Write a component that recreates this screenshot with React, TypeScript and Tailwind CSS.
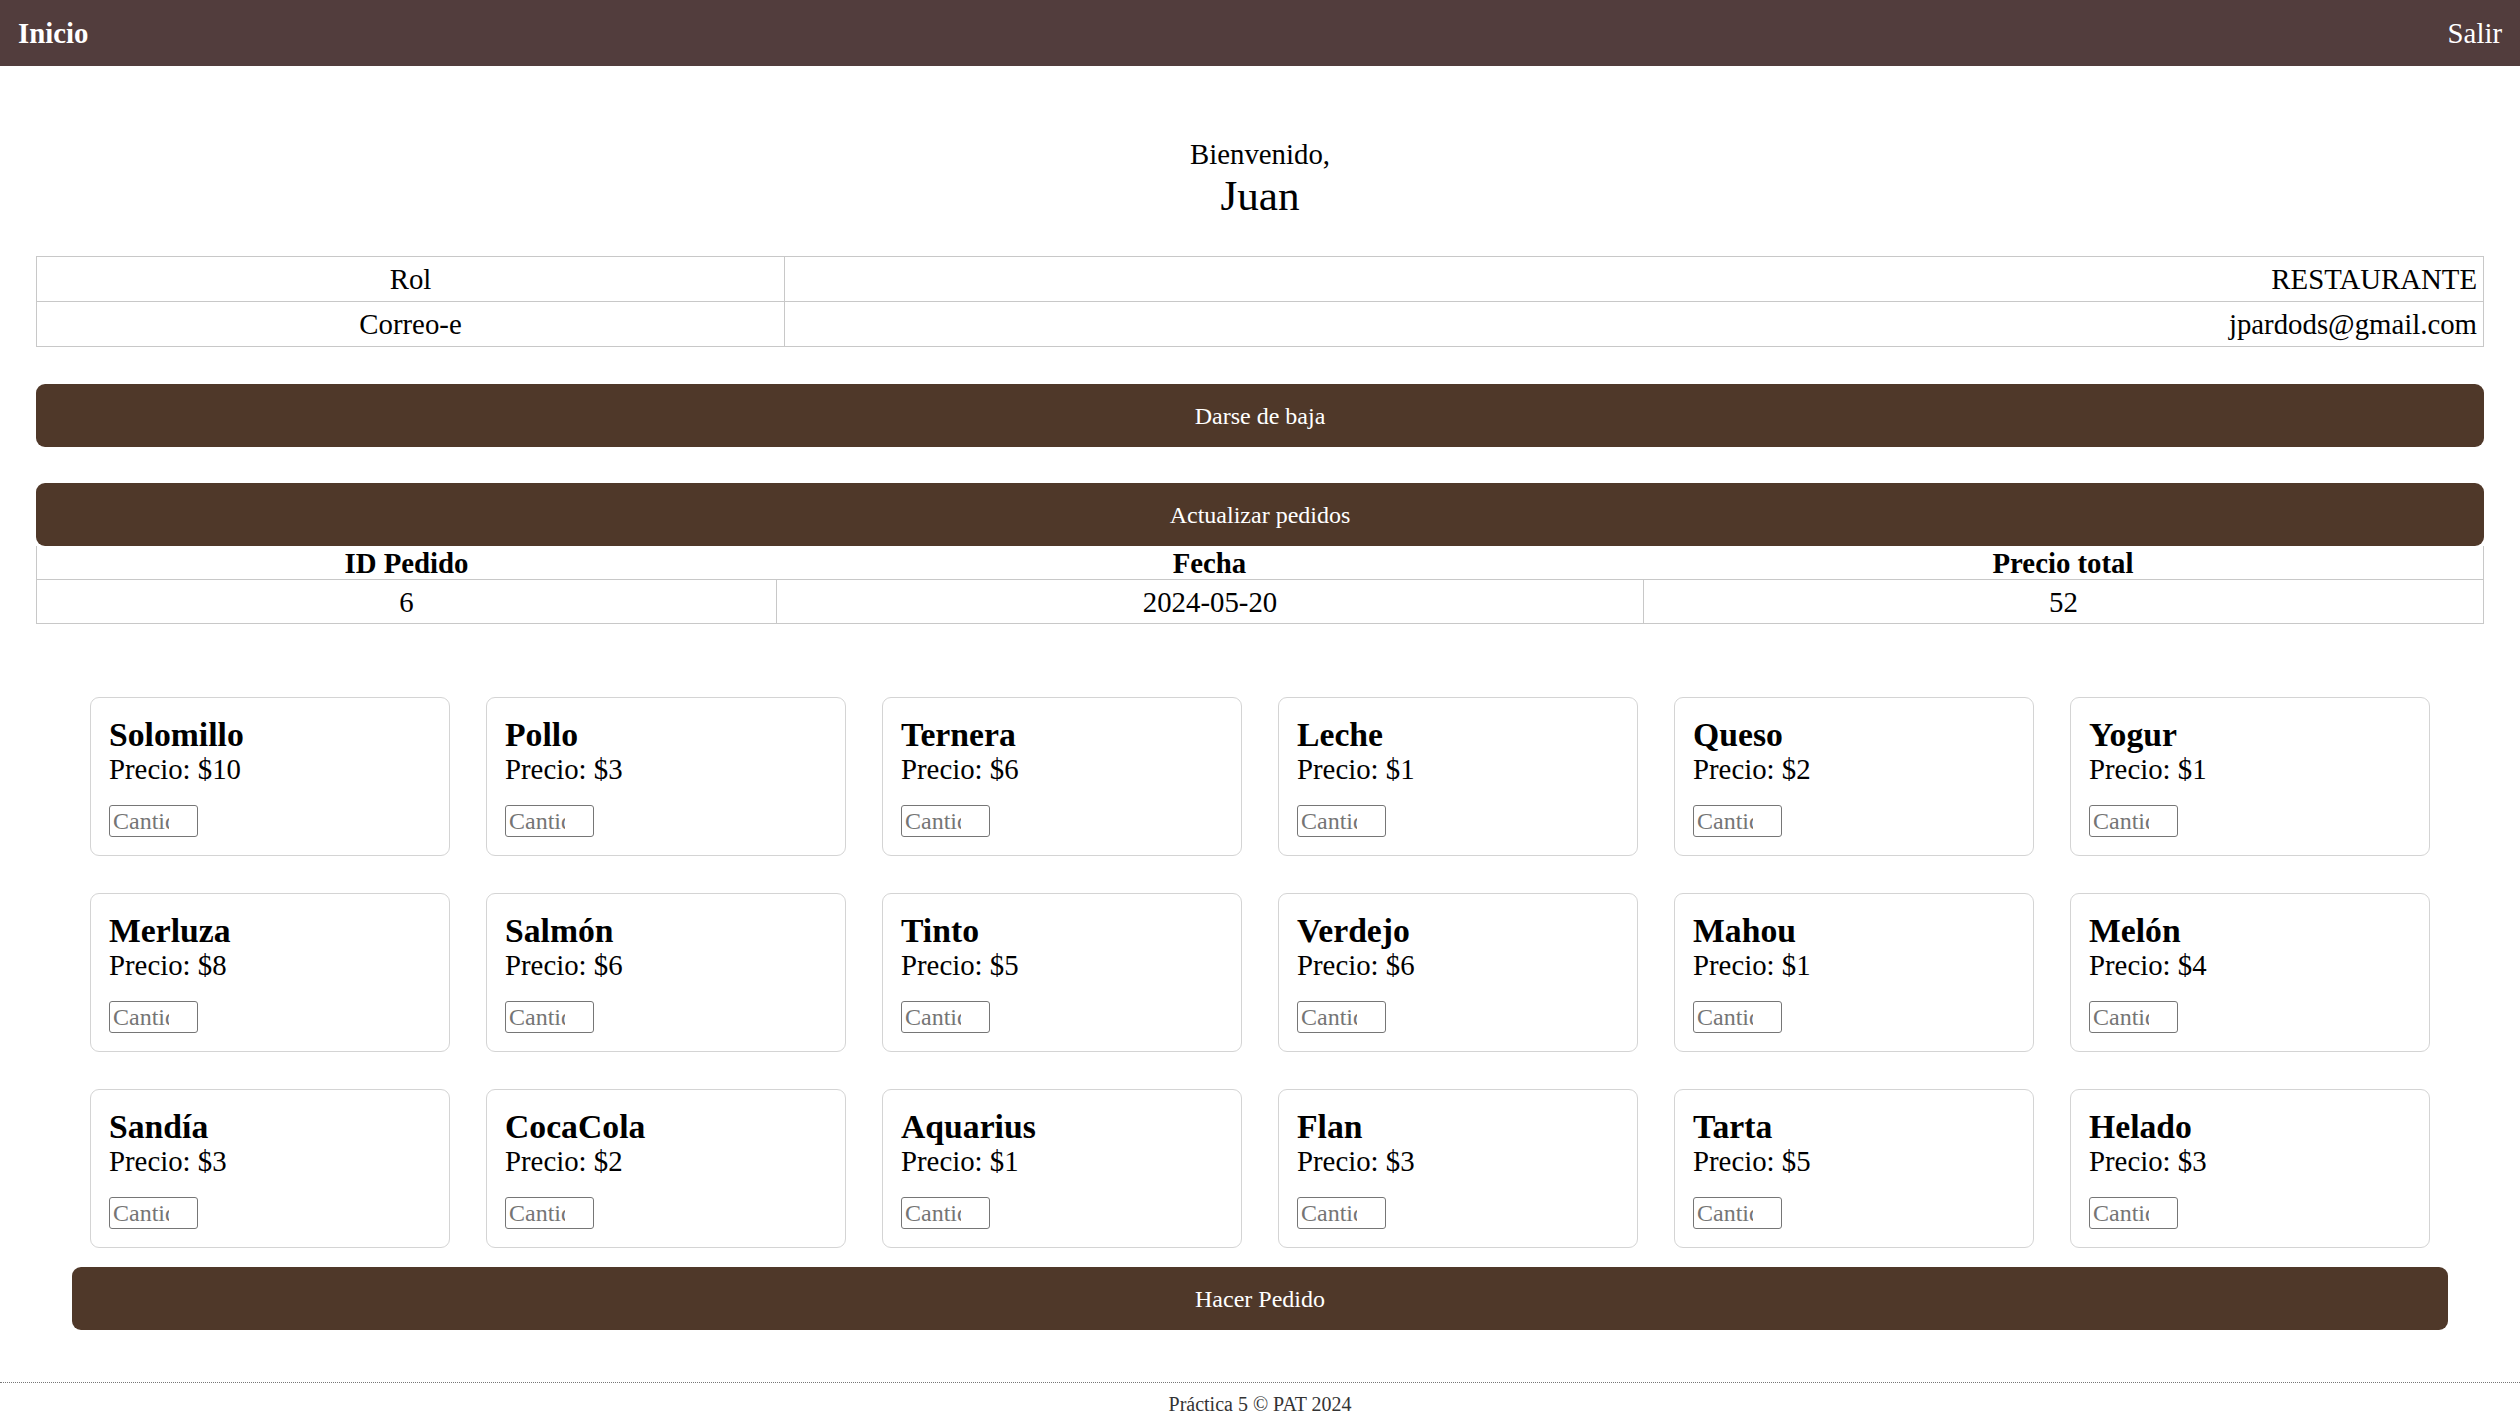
import React from "react";

const products: { name: string; price: number }[] = [
  { name: "Solomillo", price: 10 },
  { name: "Pollo", price: 3 },
  { name: "Ternera", price: 6 },
  { name: "Leche", price: 1 },
  { name: "Queso", price: 2 },
  { name: "Yogur", price: 1 },
  { name: "Merluza", price: 8 },
  { name: "Salmón", price: 6 },
  { name: "Tinto", price: 5 },
  { name: "Verdejo", price: 6 },
  { name: "Mahou", price: 1 },
  { name: "Melón", price: 4 },
  { name: "Sandía", price: 3 },
  { name: "CocaCola", price: 2 },
  { name: "Aquarius", price: 1 },
  { name: "Flan", price: 3 },
  { name: "Tarta", price: 5 },
  { name: "Helado", price: 3 },
];

function BrownButton({ label, className = "" }: { label: string; className?: string }) {
  return (
    <button
      type="button"
      className={`flex h-[63px] w-full items-center justify-center rounded-[9px] bg-[#4f3829] text-[24px] leading-[28px] text-white font-['Liberation_Serif','Times_New_Roman',serif] ${className}`}
    >
      {label}
    </button>
  );
}

export default function App() {
  return (
    <div className="min-h-screen bg-white text-black font-['Liberation_Serif','Times_New_Roman',serif]">
      <header className="flex h-[66px] items-center justify-between bg-[#523d3d] px-[18px] text-[28.8px] leading-[32px] text-white">
        <span className="font-bold">Inicio</span>
        <span>Salir</span>
      </header>

      <main className="px-[36px]">
        <div className="pt-[72px] text-center">
          <div className="text-[28.8px] leading-[32px]">Bienvenido,</div>
          <div className="mt-[2px] text-[43.2px] leading-[48px]">Juan</div>
        </div>

        <table className="mt-[36px] w-full border-collapse text-[28.8px] leading-[32px]">
          <colgroup>
            <col className="w-[748px]" />
            <col />
          </colgroup>
          <tbody>
            <tr className="h-[45px]">
              <td className="border border-[#c8c8c8] px-[6px] text-center">Rol</td>
              <td className="border border-[#c8c8c8] px-[6px] text-right">RESTAURANTE</td>
            </tr>
            <tr className="h-[45px]">
              <td className="border border-[#c8c8c8] px-[6px] text-center">Correo-e</td>
              <td className="border border-[#c8c8c8] px-[6px] text-right">jpardods@gmail.com</td>
            </tr>
          </tbody>
        </table>

        <BrownButton label="Darse de baja" className="mt-[37px]" />
        <BrownButton label="Actualizar pedidos" className="mt-[36px]" />

        <div className="text-[28.8px] leading-[32px]">
          <div className="grid h-[34px] grid-cols-[739px_867px_1fr] items-center border-x border-b border-[#c8c8c8] font-bold">
            <div className="text-center">ID Pedido</div>
            <div className="text-center">Fecha</div>
            <div className="text-center">Precio total</div>
          </div>
          <div className="grid h-[44px] grid-cols-[739px_867px_1fr] border-x border-b border-[#c8c8c8]">
            <div className="flex items-center justify-center">6</div>
            <div className="flex items-center justify-center border-l border-[#c8c8c8]">2024-05-20</div>
            <div className="flex items-center justify-center border-l border-[#c8c8c8]">52</div>
          </div>
        </div>

        <div className="mx-[36px] mt-[73px]">
          <div className="grid grid-cols-6 gap-x-[36px] gap-y-[37px] px-[18px]">
            {products.map((p) => (
              <div
                key={p.name}
                className="rounded-[9px] border border-[#d4d4d4] p-[18px]"
              >
                <h3 className="m-0 text-[33.7px] font-bold leading-[37px]">{p.name}</h3>
                <p className="m-0 text-[28.8px] leading-[32px]">Precio: ${p.price}</p>
                <input
                  type="text"
                  placeholder="Cantidad"
                  className="mt-[20px] block h-[32px] w-[89px] rounded-[3px] border border-[#767676] pl-[3px] pr-[28px] text-[24px] leading-[28px] placeholder:text-[#757575] font-['Liberation_Serif','Times_New_Roman',serif]"
                />
              </div>
            ))}
          </div>
          <BrownButton label="Hacer Pedido" className="mt-[19px]" />
        </div>
      </main>

      <footer className="mt-[52px] border-t border-dotted border-[#777] pt-[10px] pb-[5px] text-center text-[20px] leading-[22px] text-[#333]">
        Práctica 5 © PAT 2024
      </footer>
    </div>
  );
}
